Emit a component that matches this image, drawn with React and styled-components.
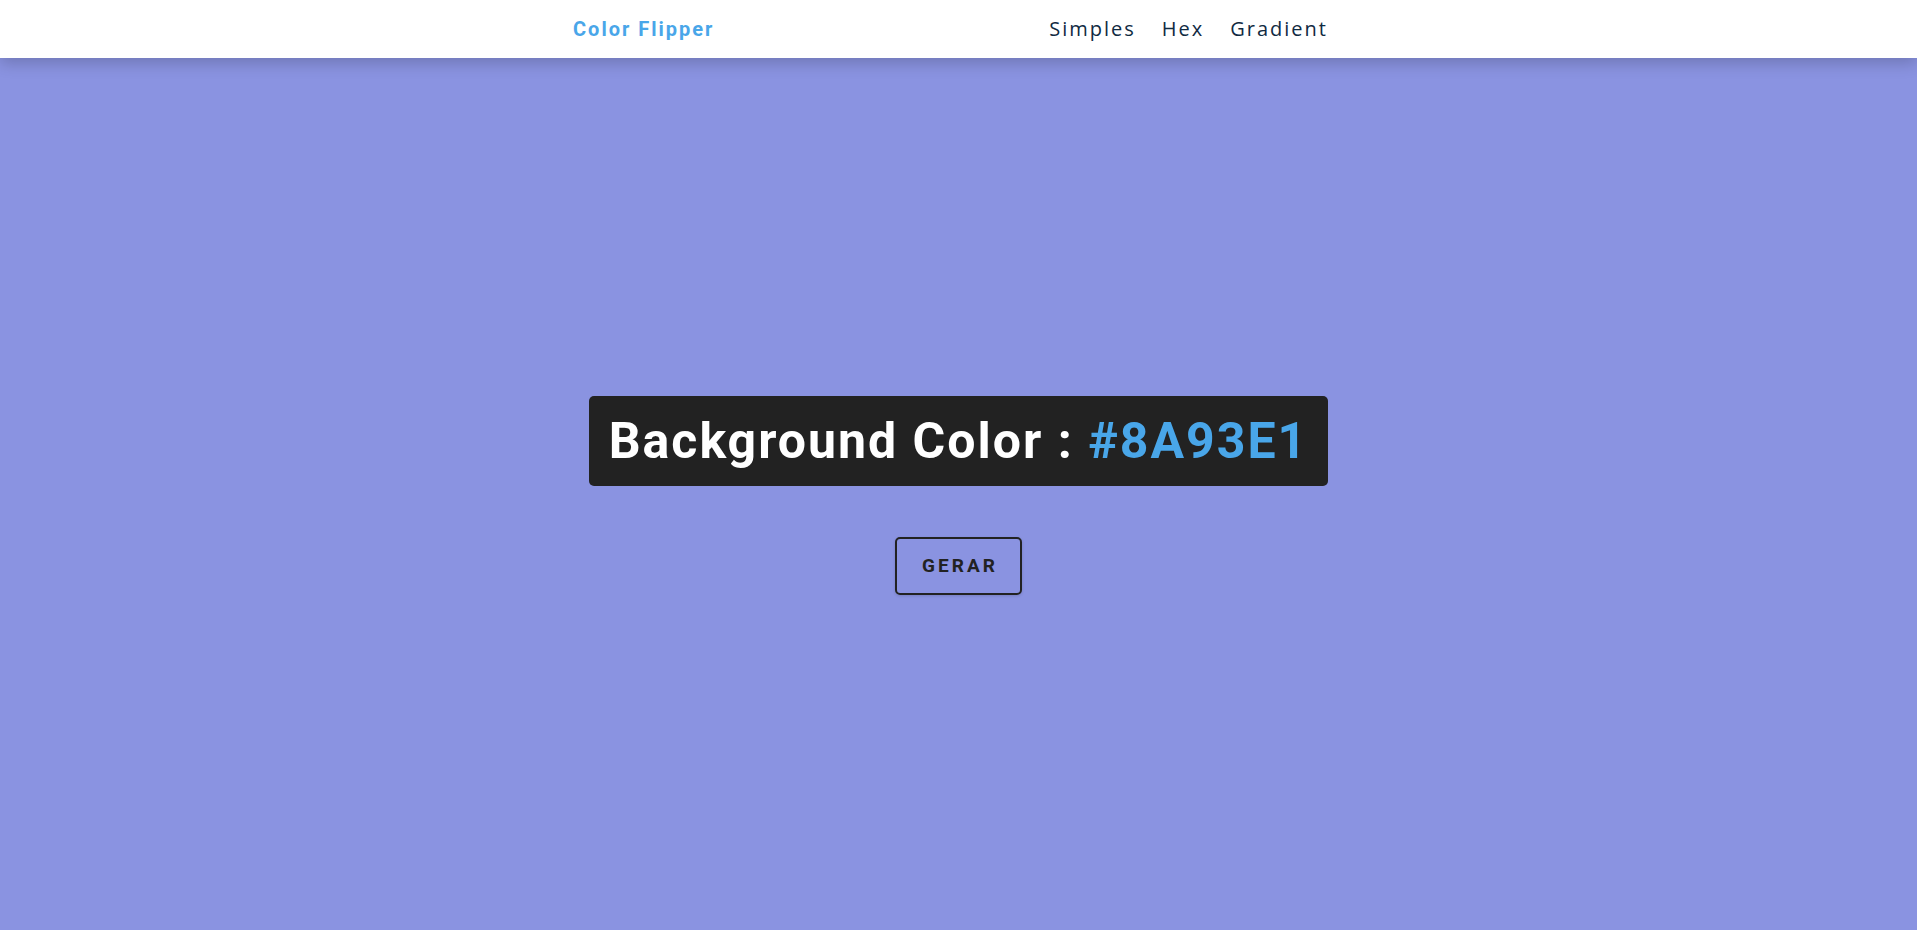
import React, { useState } from "react";
import styled, { createGlobalStyle } from "styled-components";

const GlobalStyle = createGlobalStyle`
  * { box-sizing: border-box; }
  body {
    margin: 0;
    font-family: "Open Sans", "Liberation Sans", sans-serif;
    background: #8a93e1;
  }
`;

function App() {
  const [color] = useState("#8A93E1");

  return (
    <>
      <GlobalStyle />
      <Nav>
        <NavCenter>
          <Logo>Color Flipper</Logo>
          <NavList>
            <NavItem><NavLink href="#">Simples</NavLink></NavItem>
            <NavItem><NavLink href="#">Hex</NavLink></NavItem>
            <NavItem><NavLink href="#">Gradient</NavLink></NavItem>
          </NavList>
        </NavCenter>
      </Nav>
      <Main style={{ background: color }}>
        <Container>
          <Title>
            Background Color : <ColorText>{color}</ColorText>
          </Title>
          <HeroButton>Gerar</HeroButton>
        </Container>
      </Main>
    </>
  );
}

const Nav = styled.nav`
  height: 58px;
  background: #fff;
  display: flex;
  align-items: center;
  justify-content: center;
  box-shadow: 0 5px 15px rgba(0, 0, 0, 0.2);
  position: relative;
  z-index: 1;
`;

const NavCenter = styled.div`
  width: 775px;
  padding-left: 2px;
  display: flex;
  align-items: center;
  justify-content: space-between;
`;

const Logo = styled.h4`
  margin: 0;
  font-family: Roboto, "Liberation Sans", sans-serif;
  font-weight: 700;
  font-size: 20px;
  letter-spacing: 2px;
  color: #49a6e9;
`;

const NavList = styled.ul`
  display: flex;
  list-style: none;
  margin: 0;
  padding: 0 18px 2px 0;
  gap: 26px;
`;

const NavItem = styled.li``;

const NavLink = styled.a`
  font-family: "Open Sans", sans-serif;
  font-size: 20px;
  letter-spacing: 2px;
  color: #102a42;
  text-decoration: none;
`;

const Main = styled.main`
  min-height: calc(100vh - 58px);
  display: flex;
  align-items: center;
  justify-content: center;
`;

const Container = styled.div`
  display: flex;
  flex-direction: column;
  align-items: center;
  padding-top: 2px;
`;

const Title = styled.h2`
  margin: 0 0 51px;
  padding: 20px;
  background: #222;
  color: #fff;
  border-radius: 5px;
  font-family: Roboto, "Liberation Sans", sans-serif;
  font-weight: 700;
  font-size: 50px;
  line-height: 1;
  letter-spacing: 2px;
`;

const ColorText = styled.span`
  color: #49a6e9;
`;

const HeroButton = styled.button`
  font-family: Roboto, "Liberation Sans", sans-serif;
  text-transform: uppercase;
  background: transparent;
  color: #222;
  letter-spacing: 3px;
  font-weight: 700;
  font-size: 19px;
  line-height: 26px;
  padding: 14px 22px 14px 25px;
  border: 2px solid #222;
  border-radius: 5px;
  cursor: pointer;
  box-shadow: 0 1px 3px rgba(0, 0, 0, 0.15);
`;

export default App;
